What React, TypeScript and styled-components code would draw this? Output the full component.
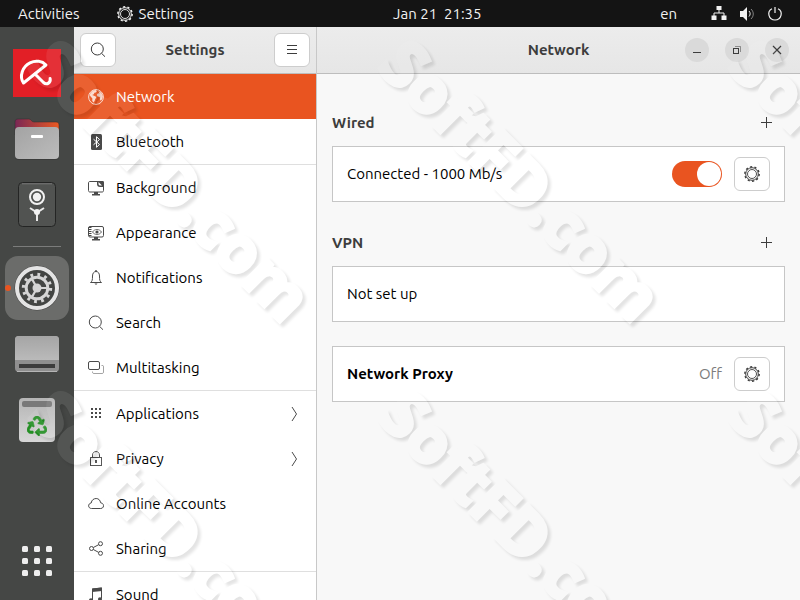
import React, { useState } from "react";
import styled, { createGlobalStyle } from "styled-components";
import { FaRecycle } from "react-icons/fa";

const GlobalStyle = createGlobalStyle`
  *, *::before, *::after { box-sizing: border-box; }
  body {
    margin: 0;
    font-family: Ubuntu, "Noto Sans", "Open Sans", sans-serif;
    font-size: 15px;
    line-height: 20px;
    color: #000;
  }
  button { font: inherit; color: inherit; cursor: pointer; }
  h1, h2, ul, p { margin: 0; padding: 0; }
  svg { display: block; flex: none; }
`;

const Desktop = styled.div`
  position: relative;
  display: flex;
  flex-direction: column;
  height: 100vh;
  overflow: hidden;
`;

const TopBar = styled.header`
  display: grid;
  grid-template-columns: 395fr auto 320fr;
  align-items: center;
  flex: none;
  height: 27px;
  background: #141414;
  color: #f2f2f2;
`;

const TopGroup = styled.div<{ $end?: boolean }>`
  display: flex;
  align-items: center;
  justify-content: ${(p) => (p.$end ? "flex-end" : "flex-start")};
  gap: ${(p) => (p.$end ? "12px" : "37px")};
  padding: ${(p) => (p.$end ? "0 17px" : "0 18px")};
`;

const TopButton = styled.button`
  display: flex;
  align-items: center;
  gap: 6px;
  padding: 0;
  border: 0;
  background: none;
  white-space: pre;
`;

const Language = styled(TopButton)`
  margin-right: 22px;
`;

const Workspace = styled.div`
  display: flex;
  flex: 1;
  min-height: 0;
`;

const Dock = styled.nav`
  display: flex;
  flex-direction: column;
  align-items: center;
  gap: 2px;
  flex: none;
  width: 74px;
  padding: 14px 0 7px;
  background: #454745;
`;

const DockItem = styled.button<{ $active?: boolean }>`
  position: relative;
  display: grid;
  place-items: center;
  flex: none;
  width: 64px;
  height: 64px;
  padding: 0;
  border: 0;
  border-radius: 13px;
  background: ${(p) => (p.$active ? "#6b6c6a" : "transparent")};
`;

const RunningDot = styled.span`
  position: absolute;
  left: 0;
  top: 29px;
  width: 6px;
  height: 6px;
  border-radius: 3px;
  background: #e95420;
`;

const DockRule = styled.hr`
  width: 48px;
  margin: 7px 0;
  border: 0;
  border-top: 1px solid #7b7c7b;
`;

const Spacer = styled.div`
  flex: 1;
`;

const Sidebar = styled.aside`
  display: flex;
  flex-direction: column;
  flex: none;
  width: 243px;
  border-right: 1px solid #c8c8c8;
  background: #fff;
  overflow: hidden;
`;

const HeaderBar = styled.div`
  display: grid;
  grid-template-columns: 1fr auto 1fr;
  align-items: center;
  flex: none;
  height: 47px;
  padding: 0 6px;
  border-bottom: 1px solid #bdbdbd;
  background: linear-gradient(#ececec, #e6e6e6);
`;

const MainHeader = styled(HeaderBar)`
  padding: 0 11px;
`;

const Title = styled.h1`
  grid-column: 2;
  font-size: 15px;
  line-height: 20px;
  font-weight: 700;
  color: #3d3d3d;
`;

const BoxButton = styled.button<{ $end?: boolean }>`
  display: grid;
  place-items: center;
  justify-self: ${(p) => (p.$end ? "end" : "start")};
  width: 36px;
  height: 34px;
  padding: 0;
  border: 1px solid #cdcdcd;
  border-radius: 6px;
  background: #fff;
  color: #3d3d3d;
`;

const WindowControls = styled.div`
  display: flex;
  justify-content: flex-end;
  gap: 16px;
`;

const RoundButton = styled.button`
  display: grid;
  place-items: center;
  width: 24px;
  height: 24px;
  padding: 0;
  border: 0;
  border-radius: 50%;
  background: #dadada;
  color: #3d3d3d;
`;

const NavList = styled.ul`
  list-style: none;
`;

const NavEntry = styled.li<{ $divided?: boolean }>`
  border-bottom: ${(p) => (p.$divided ? "1px solid #dfdfdf" : "0")};
`;

const NavButton = styled.button<{ $active?: boolean }>`
  display: flex;
  align-items: center;
  gap: 12px;
  width: 100%;
  height: 45px;
  padding: 0 14px;
  border: 0;
  text-align: left;
  background: ${(p) => (p.$active ? "#e95420" : "transparent")};
  color: ${(p) => (p.$active ? "#fff" : "#000")};
  svg { color: ${(p) => (p.$active ? "#fbd9cd" : "#4a4a4a")}; }
`;

const NavLabel = styled.span`
  flex: 1;
`;

const Main = styled.main`
  flex: 1;
  min-width: 0;
  background: #f8f8f8;
`;

const Content = styled.div`
  display: flex;
  flex-direction: column;
  padding: 24px 15px;
`;

const SectionHead = styled.div`
  display: flex;
  align-items: center;
  justify-content: space-between;
  height: 48px;
  padding: 2px 6px 0 0;
`;

const SectionTitle = styled.h2`
  font-size: 15px;
  line-height: 20px;
  font-weight: 700;
  color: #3d3d3d;
`;

const AddButton = styled.button`
  display: grid;
  place-items: center;
  width: 24px;
  height: 24px;
  padding: 0;
  border: 0;
  background: none;
  color: #3d3d3d;
`;

const Card = styled.div<{ $gap?: number }>`
  display: flex;
  align-items: center;
  gap: 12px;
  height: 56px;
  margin-bottom: ${(p) => p.$gap ?? 16}px;
  padding: 0 14px;
  border: 1px solid #c6c6c6;
  background: #fff;
`;

const CardLabel = styled.p<{ $strong?: boolean }>`
  flex: 1;
  font-weight: ${(p) => (p.$strong ? 700 : 400)};
`;

const Status = styled.span`
  color: #7d7d7d;
`;

const Switch = styled.input`
  appearance: none;
  display: flex;
  width: 50px;
  height: 26px;
  margin: 0;
  padding: 1px;
  border-radius: 13px;
  background: #c8c8c8;
  cursor: pointer;
  &::before {
    content: "";
    width: 24px;
    height: 24px;
    border-radius: 50%;
    background: #fff;
  }
  &:checked { background: #e95420; justify-content: flex-end; }
`;

const Watermark = styled.svg`
  position: absolute;
  inset: 0;
  width: 100%;
  height: 100%;
  pointer-events: none;
`;

const Icon = ({ children, size = 16 }: { children: React.ReactNode; size?: number }) => (
  <svg width={size} height={size} viewBox={`0 0 ${size} ${size}`} fill="none" stroke="currentColor" aria-hidden="true">
    {children}
  </svg>
);

const GearIcon = () => (
  <Icon>
    <circle cx="8" cy="8" r="7.2" strokeWidth="1.4" strokeDasharray="2.2 2.326" />
    <circle cx="8" cy="8" r="6.3" strokeWidth="1" />
    <circle cx="8" cy="8" r="4.5" strokeWidth=".9" />
  </Icon>
);

const SearchIcon = () => (
  <Icon>
    <circle cx="7.3" cy="7" r="6" />
    <path d="M11.6 11.4 15 14.7" />
  </Icon>
);

const PlusIcon = () => (
  <Icon size={12}>
    <path d="M5.5 0v11M0 5.5h11" />
  </Icon>
);

const navIcons: Record<string, React.ReactNode> = {
  Network: (
    <Icon>
      <circle cx="8" cy="8" r="7.4" />
      <path
        fill="currentColor"
        stroke="none"
        d="M2.2 4.4 5 1.6l2.6-.5 1.2 1.2-1 1.2-1.4.3-.6 1.4-1.6.8 1.3.6 2.2.8.6 1.2-1.2 1.6-.5 1.8-1.2 1.6-1.2-1.8.2-2.4L2.6 7.6 1.7 6zM10.2 2l2.2.9 1.8 2.2.7 2.5-.8 2.7-1.4 1.5-.9-1.5.2-1.7-.8-.9-1.7-.3-.6-1.7 1.1-1.4 1.6.1-.6-.9z"
      />
    </Icon>
  ),
  Bluetooth: (
    <Icon>
      <rect x="3" y="0" width="11" height="16" rx="1.5" fill="currentColor" stroke="none" />
      <path d="m5.5 5.2 6 5.3-3 2.800V2.700l3 2.800-6 5.300" stroke="#fff" />
    </Icon>
  ),
  Background: (
    <Icon>
      <path d="M9 1.500H2C1 1.500.5 2 .5 3v7.500c0 1 .5 1.500 1.500 1.500h12c1 0 1.500-.5 1.500-1.500V7" />
      <path d="M9 1h5.500C15.500 1 16 1.500 16 2.500V7h-4c-2 0-3-1-3-3z" fill="currentColor" stroke="none" />
      <path d="M10.500 2v1.500c0 1.500.5 2 2 2H14z" fill="#fff" stroke="none" />
      <path d="M6 12h4v2h2v1.500H4V14h2z" fill="currentColor" stroke="none" />
    </Icon>
  ),
  Appearance: (
    <Icon>
      <rect x=".5" y="1.500" width="15" height="10.500" rx="1.500" />
      <path d="M2 2v10" strokeWidth="3" strokeDasharray="1 1" />
      <path d="M4.500 7c2-3.300 7-3.300 9 0-2 3.300-7 3.300-9 0z" strokeWidth=".8" />
      <circle cx="9" cy="7" r="1.600" fill="currentColor" stroke="none" />
      <path d="M6 12h4v2h2v1.500H4V14h2z" fill="currentColor" stroke="none" />
    </Icon>
  ),
  Notifications: (
    <Icon>
      <path d="M2.500 12.500c1.700-1 2-2.500 2-6.500C4.500 3.200 6 1.500 8 1.500S11.500 3.200 11.500 6c0 4 .3 5.500 2 6.500z" />
      <path d="M6.500 13.500C7 15 9 15 9.500 13.500zM7.300 0h1.400v2H7.300z" fill="currentColor" stroke="none" />
    </Icon>
  ),
  Search: <SearchIcon />,
  Multitasking: (
    <Icon>
      <rect x=".5" y="1.500" width="11" height="8" rx="1.500" />
      <path d="M13.500 5.500h1c.6 0 1 .4 1 1v5.500c0 .9-.6 1.500-1.500 1.500H6c-.9 0-1.500-.5-1.500-1.500v-.5" opacity=".5" />
    </Icon>
  ),
  Applications: (
    <Icon>
      <path d="M3 3h2m2 0h2m2 0h2M3 7h2m2 0h2m2 0h2M3 11h2m2 0h2m2 0h2" strokeWidth="2" />
    </Icon>
  ),
  Privacy: (
    <Icon>
      <rect x="2.500" y="6.500" width="11" height="8" />
      <path d="M4.500 6.500V4c0-4.600 7-4.600 7 0v2.500" />
      <path d="M7 9h2v3H7z" fill="currentColor" stroke="none" />
    </Icon>
  ),
  "Online Accounts": (
    <Icon>
      <path d="M3.500 12.500C-.2 12.500-.3 7.400 3.200 7 3.500 3.900 6 2.500 8.200 2.500c2.300 0 4.200 1.800 4.300 4.200 4 .4 4 5.800.2 5.800z" />
    </Icon>
  ),
  Sharing: (
    <Icon>
      <circle cx="3.500" cy="7.500" r="2" />
      <circle cx="12.500" cy="2.700" r="2" />
      <circle cx="12.500" cy="12.300" r="2" />
      <path d="m5.300 6.500 5.400-2.800M5.300 8.500l5.400 2.900" />
    </Icon>
  ),
  Sound: (
    <Icon>
      <path d="M4.500 13V2l9-1v10.500" />
      <path d="M4 1.500 14 .5v3.500L4 5z" fill="currentColor" stroke="none" />
      <ellipse cx="3" cy="13" rx="2" ry="1.800" fill="currentColor" stroke="none" />
      <ellipse cx="12" cy="12" rx="2" ry="1.800" fill="currentColor" stroke="none" />
    </Icon>
  ),
};

const navItems: { label: string; divided?: boolean; more?: boolean }[] = [
  { label: "Network" },
  { label: "Bluetooth", divided: true },
  { label: "Background" },
  { label: "Appearance" },
  { label: "Notifications" },
  { label: "Search" },
  { label: "Multitasking", divided: true },
  { label: "Applications", more: true },
  { label: "Privacy", more: true },
  { label: "Online Accounts" },
  { label: "Sharing", divided: true },
  { label: "Sound" },
];

const AntivirusIcon = () => (
  <svg width="48" height="48" viewBox="0 0 48 48">
    <path fill="#e21f26" d="M0 0h48v48H0z" />
    <path fill="none" stroke="#fff" strokeWidth="3" strokeLinecap="round" strokeLinejoin="round"
      d="M10.500 34C6 27 9.500 17.500 17 13.800c5.500-2.600 12-2 16 2.200z" />
    <path fill="none" stroke="#fff" strokeWidth="3" strokeLinecap="round" strokeLinejoin="round"
      d="M22 25l8.500 8.500c3.500 3 7.500 0 6.600-4" />
  </svg>
);

const FilesIcon = () => (
  <svg width="48" height="48" viewBox="0 0 48 48">
    <defs>
      <linearGradient id="folderBack"><stop stopColor="#7a2755" /><stop offset="1" stopColor="#ea5a22" /></linearGradient>
      <linearGradient id="folderFront" x2="1" y2="1"><stop stopColor="#a3a3a3" /><stop offset="1" stopColor="#bcbcbc" /></linearGradient>
    </defs>
    <path fill="url(#folderBack)" stroke="#2c2c2c" strokeWidth=".5" d="M2 20V7c0-2 1-3 3-3h11c2 0 2.500 3 5 3h22c2 0 3 1 3 3v12z" />
    <path fill="#2e2e2e" opacity=".4" d="M2 41c0 3 1 4 4 4h36c3 0 4-1 4-4z" />
    <rect x="2" y="12" width="44" height="32" rx="4" fill="url(#folderFront)" />
    <rect x="18" y="20" width="12" height="3" rx="1" fill="#fff" />
  </svg>
);

const DiskToolIcon = () => (
  <svg width="48" height="48" viewBox="0 0 48 48">
    <rect x="5.500" y="1.500" width="37" height="44" rx="4" fill="#515351" stroke="#242524" />
    <path d="M9 2.800h30" stroke="#777" />
    <circle cx="24" cy="16" r="7" fill="none" stroke="#f2f2f2" strokeWidth="2" />
    <circle cx="24" cy="16" r="4.200" fill="#f2f2f2" />
    <path d="M17 27l7 4.500 7-4.500M24 31v9" fill="none" stroke="#e9e9e9" strokeWidth="2" />
    <circle cx="24" cy="31" r="3" fill="#f2f2f2" />
  </svg>
);

const SettingsAppIcon = () => (
  <svg width="48" height="48" viewBox="0 0 48 48">
    <circle cx="24" cy="24" r="22.500" fill="#2d2d2d" opacity=".6" />
    <circle cx="24" cy="24" r="20" fill="#434543" stroke="#e4e4e4" strokeWidth="4" />
    <circle cx="24" cy="24" r="13.600" fill="none" stroke="#d5d5d5" strokeWidth="3.200" strokeDasharray="2.800 4.321" />
    <circle cx="24" cy="24" r="10.800" fill="none" stroke="#d5d5d5" strokeWidth="3" />
    <circle cx="24" cy="24" r="4.500" fill="#d5d5d5" />
    <path d="M24 24h10M24 24l-5-9M24 24l-5 9" stroke="#d5d5d5" strokeWidth="2.200" />
  </svg>
);

const DriveIcon = () => (
  <svg width="48" height="48" viewBox="0 0 48 48">
    <defs><linearGradient id="driveTop" x2="0" y2="1"><stop stopColor="#a5a5a5" /><stop offset="1" stopColor="#bababa" /></linearGradient></defs>
    <rect x="2" y="6" width="44" height="36" rx="4" fill="#8f8f8f" />
    <path fill="url(#driveTop)" d="M2 30V10c0-3 1-4 4-4h36c3 0 4 1 4 4v20z" />
    <path fill="#3c3c3c" d="M6 34h36v4H6z" />
    <path d="M4 41.500h40" stroke="#b5b5b5" />
  </svg>
);

const TrashCan = styled.span`
  display: flex;
  flex-direction: column;
  align-items: center;
  gap: 9px;
  width: 36px;
  height: 44px;
  padding: 3px;
  border-radius: 4px;
  background: linear-gradient(#b5b5b5, #d7d7d7);
  color: #238f23;
  &::before {
    content: "";
    width: 30px;
    height: 6px;
    border-radius: 2px;
    background: #797979;
  }
  path {
    stroke: currentColor;
    stroke-width: 16px;
  }
`;

const AppGridIcon = () => (
  <svg width="32" height="32" viewBox="0 0 32 32" fill="#eee">
    {[1, 13, 25].flatMap((y) => [1, 13, 25].map((x) => <rect key={`${x}-${y}`} x={x} y={y} width="6" height="6" rx="1.500" />))}
  </svg>
);

const tileOrigins = [
  [38, 40], [388, 40], [738, 40],
  [38, 390], [388, 390], [738, 390],
];

export default function App() {
  const [selected, setSelected] = useState("Network");
  const [wired, setWired] = useState(true);

  return (
    <>
      <GlobalStyle />
      <Desktop>
        <TopBar>
          <TopGroup>
            <TopButton>Activities</TopButton>
            <TopButton><GearIcon />Settings</TopButton>
          </TopGroup>
          <TopButton>{"Jan 21  21:35"}</TopButton>
          <TopGroup $end>
            <Language>en</Language>
            <TopButton aria-label="Wired network">
              <Icon>
                <path d="M5.500 0h5v4h-5zM.5 9.500h5V14h-5zM10.500 9.500h5V14h-5z" fill="currentColor" stroke="none" />
                <path d="M8 4v3M3 10V7h10v3" />
              </Icon>
            </TopButton>
            <TopButton aria-label="Volume">
              <Icon>
                <path d="M1 5h3l4-4v14l-4-4H1z" fill="currentColor" stroke="none" />
                <path d="M10 5c1.500 1.500 1.500 4 0 5.500" />
                <path d="M12 3c3 3 3 7 0 10" opacity=".5" />
              </Icon>
            </TopButton>
            <TopButton aria-label="Power">
              <Icon>
                <path d="M5 2.800C-.5 5.500 1.500 14 8 14s8.500-8.500 3-11.200M8 1v6" strokeWidth="1.200" />
              </Icon>
            </TopButton>
          </TopGroup>
        </TopBar>

        <Workspace>
          <Dock aria-label="Dock">
            <DockItem aria-label="Antivirus"><AntivirusIcon /></DockItem>
            <DockItem aria-label="Files"><FilesIcon /></DockItem>
            <DockItem aria-label="Disk tool"><DiskToolIcon /></DockItem>
            <DockRule />
            <DockItem $active aria-label="Settings"><RunningDot /><SettingsAppIcon /></DockItem>
            <DockItem aria-label="Drive"><DriveIcon /></DockItem>
            <DockItem aria-label="Trash"><TrashCan><FaRecycle size={20} /></TrashCan></DockItem>
            <Spacer />
            <DockItem aria-label="Show applications"><AppGridIcon /></DockItem>
          </Dock>

          <Sidebar>
            <HeaderBar>
              <BoxButton aria-label="Search settings"><SearchIcon /></BoxButton>
              <Title>Settings</Title>
              <BoxButton $end aria-label="Menu">
                <Icon><path d="M3 3.500h10M3 7.500h10M3 11.500h10" /></Icon>
              </BoxButton>
            </HeaderBar>
            <NavList>
              {navItems.map(({ label, divided, more }) => (
                <NavEntry key={label} $divided={divided}>
                  <NavButton $active={selected === label} onClick={() => setSelected(label)}>
                    {navIcons[label]}
                    <NavLabel>{label}</NavLabel>
                    {more && <Icon><path d="M6 1l4.500 7L6 15" /></Icon>}
                  </NavButton>
                </NavEntry>
              ))}
            </NavList>
          </Sidebar>

          <Main>
            <MainHeader>
              <Title as="h2">Network</Title>
              <WindowControls>
                <RoundButton aria-label="Minimize"><Icon><path d="M4 10.500h8" /></Icon></RoundButton>
                <RoundButton aria-label="Restore">
                  <Icon>
                    <rect x="4.500" y="6.500" width="5" height="5" />
                    <path d="M6 4.500h5.500V10" opacity=".5" />
                  </Icon>
                </RoundButton>
                <RoundButton aria-label="Close"><Icon><path d="m4 4 8 8m0-8-8 8" strokeWidth="1.200" /></Icon></RoundButton>
              </WindowControls>
            </MainHeader>
            <Content>
              <SectionHead>
                <SectionTitle>Wired</SectionTitle>
                <AddButton aria-label="Add wired connection"><PlusIcon /></AddButton>
              </SectionHead>
              <Card>
                <CardLabel as="label" htmlFor="wired">Connected - 1000 Mb/s</CardLabel>
                <Switch id="wired" type="checkbox" role="switch" checked={wired} onChange={(e) => setWired(e.target.checked)} />
                <BoxButton aria-label="Wired options"><GearIcon /></BoxButton>
              </Card>
              <SectionHead>
                <SectionTitle>VPN</SectionTitle>
                <AddButton aria-label="Add VPN"><PlusIcon /></AddButton>
              </SectionHead>
              <Card $gap={24}>
                <CardLabel>Not set up</CardLabel>
              </Card>
              <Card>
                <CardLabel $strong>Network Proxy</CardLabel>
                <Status>Off</Status>
                <BoxButton aria-label="Proxy options"><GearIcon /></BoxButton>
              </Card>
            </Content>
          </Main>
        </Workspace>

        <Watermark aria-hidden="true">
          <defs>
            <filter id="emboss" x="-10%" y="-10%" width="120%" height="120%" colorInterpolationFilters="sRGB">
              <feGaussianBlur in="SourceAlpha" stdDeviation="1.5" />
              <feOffset dx="3" dy="3" />
              <feComposite in2="SourceAlpha" operator="out" result="edge" />
              <feComponentTransfer in="edge" result="shade"><feFuncA type="linear" slope=".11" /></feComponentTransfer>
              <feComponentTransfer in="SourceGraphic" result="face"><feFuncA type="linear" slope=".08" /></feComponentTransfer>
              <feMerge><feMergeNode in="shade" /><feMergeNode in="face" /></feMerge>
            </filter>
          </defs>
          {tileOrigins.map(([x, y]) => (
            <g key={`${x}-${y}`} transform={`translate(${x} ${y})`} filter="url(#emboss)">
              <text transform="translate(-12 28) rotate(45)" fill="#fff" stroke="#fff" strokeWidth="4" fontFamily="'Open Sans', sans-serif" fontWeight="700" fontSize="64">
                SoftFD.com
              </text>
            </g>
          ))}
        </Watermark>
      </Desktop>
    </>
  );
}
